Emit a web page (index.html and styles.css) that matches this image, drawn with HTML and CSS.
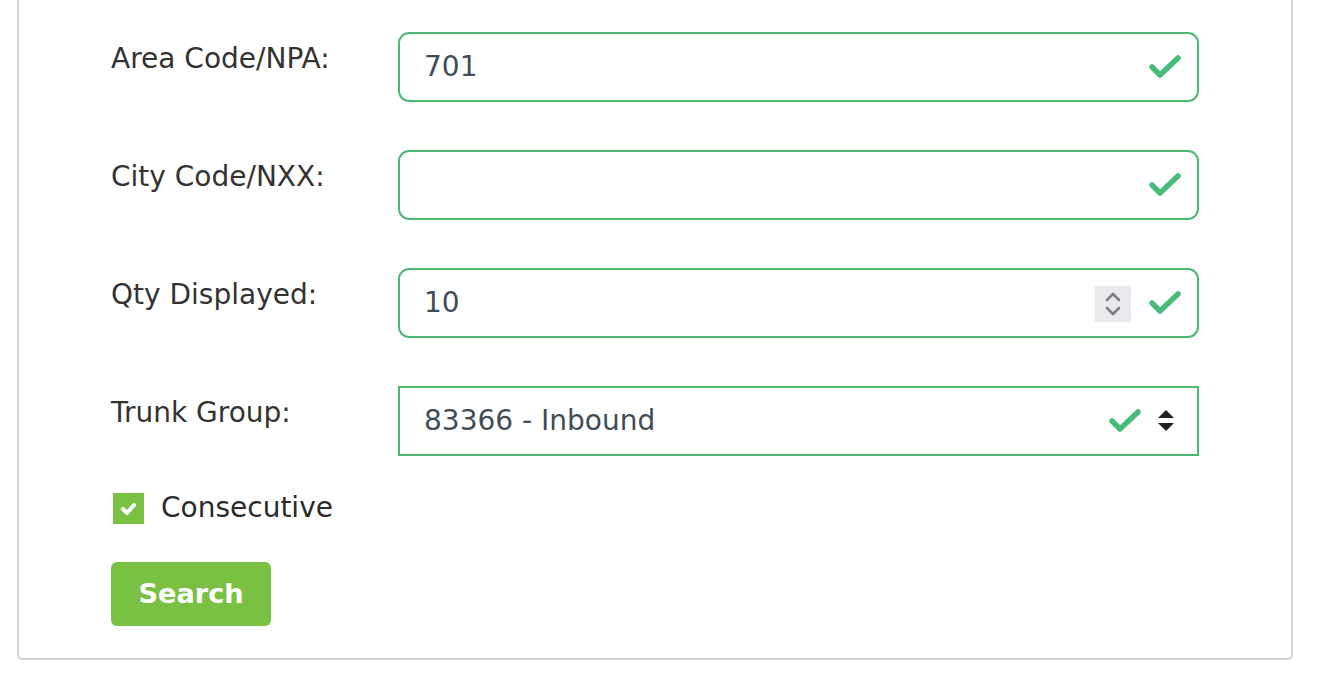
FILE: index.html
```html
<!DOCTYPE html>
<html>
<head>
<meta charset="utf-8">
<link rel="stylesheet" href="styles.css">
</head>
<body>
<div class="card">
  <div class="form-grid">
    <div class="label">Area Code/NPA:</div>
    <div class="field rounded">
      <span class="value">701</span>
      <svg class="check" viewBox="0 0 32 24" width="32" height="24"><polyline points="3,12 11,20 29,3" /></svg>
    </div>

    <div class="label">City Code/NXX:</div>
    <div class="field rounded">
      <span class="value"></span>
      <svg class="check" viewBox="0 0 32 24" width="32" height="24"><polyline points="3,12 11,20 29,3" /></svg>
    </div>

    <div class="label">Qty Displayed:</div>
    <div class="field rounded">
      <span class="value">10</span>
      <span class="spinner">
        <svg viewBox="0 0 36 36" width="36" height="36"><polyline class="chev" points="12,14 18,8 24,14" /><polyline class="chev" points="12,22 18,28 24,22" /></svg>
      </span>
      <svg class="check" viewBox="0 0 32 24" width="32" height="24"><polyline points="3,12 11,20 29,3" /></svg>
    </div>

    <div class="label">Trunk Group:</div>
    <div class="field select">
      <span class="value">83366 - Inbound</span>
      <svg class="check" viewBox="0 0 32 24" width="32" height="24"><polyline points="3,12 11,20 29,3" /></svg>
      <svg class="sort" viewBox="0 0 16 22" width="16" height="22"><polygon points="8,0 16,8 0,8" /><polygon points="0,13 16,13 8,21" /></svg>
    </div>
  </div>

  <div class="checkrow">
    <span class="checkbox">
      <svg viewBox="0 0 31 31" width="31" height="31"><polyline points="10,16 14,20 21,12" /></svg>
    </span>
    <span class="check-label">Consecutive</span>
  </div>

  <button class="btn">Search</button>
</div>
</body>
</html>
```

FILE: styles.css
```css
html, body {
  margin: 0;
  padding: 0;
  background: #ffffff;
}

body {
  font-family: "DejaVu Sans", "Liberation Sans", sans-serif;
  color: #333333;
}

.card {
  margin-left: 17px;
  width: 1276px;
  height: 660px;
  box-sizing: border-box;
  border: 2px solid #d4d4d4;
  border-top: none;
  border-radius: 0 0 5px 5px;
  padding: 32px 0 0 92px;
}

.form-grid {
  display: grid;
  grid-template-columns: 287px 801px;
  grid-auto-rows: 70px;
  row-gap: 48px;
}

.label {
  font-size: 28px;
  line-height: 40px;
  padding-top: 7px;
  color: #333333;
}

.field {
  display: flex;
  align-items: center;
  box-sizing: border-box;
  height: 70px;
  border: 2px solid #4cb874;
  padding: 0 16px 0 24px;
  color: #414c57;
  font-size: 28px;
}

.field.rounded {
  border-radius: 11px;
}

.field.select {
  border-radius: 0;
  padding-right: 23px;
}

.value {
  flex: 1;
  padding-bottom: 2px;
}

.check {
  fill: none;
  stroke: #48bb78;
  stroke-width: 5.5;
  stroke-linecap: round;
  stroke-linejoin: round;
}

.spinner {
  display: flex;
  width: 36px;
  height: 36px;
  background: #e9e9ed;
  margin-right: 18px;
  margin-top: 2px;
}

.chev {
  fill: none;
  stroke: #7d7d82;
  stroke-width: 2.6;
  stroke-linecap: round;
  stroke-linejoin: round;
}

.sort {
  margin-left: 17px;
  fill: #222222;
}

.checkrow {
  display: flex;
  align-items: center;
  margin-top: 32px;
  padding-left: 2px;
}

.checkbox {
  display: flex;
  width: 31px;
  height: 31px;
  background: #7ac143;
}

.checkbox polyline {
  fill: none;
  stroke: #ffffff;
  stroke-width: 4;
  stroke-linecap: round;
  stroke-linejoin: round;
}

.check-label {
  margin-left: 17px;
  font-size: 28px;
  line-height: 40px;
  color: #2b2b2b;
}

.btn {
  display: block;
  margin-top: 34px;
  width: 160px;
  height: 64px;
  border: none;
  border-radius: 6px;
  background: #7ac143;
  color: #ffffff;
  font-family: "DejaVu Sans", "Liberation Sans", sans-serif;
  font-weight: bold;
  font-size: 27.2px;
  padding: 0 0 2px 0;
}
```
